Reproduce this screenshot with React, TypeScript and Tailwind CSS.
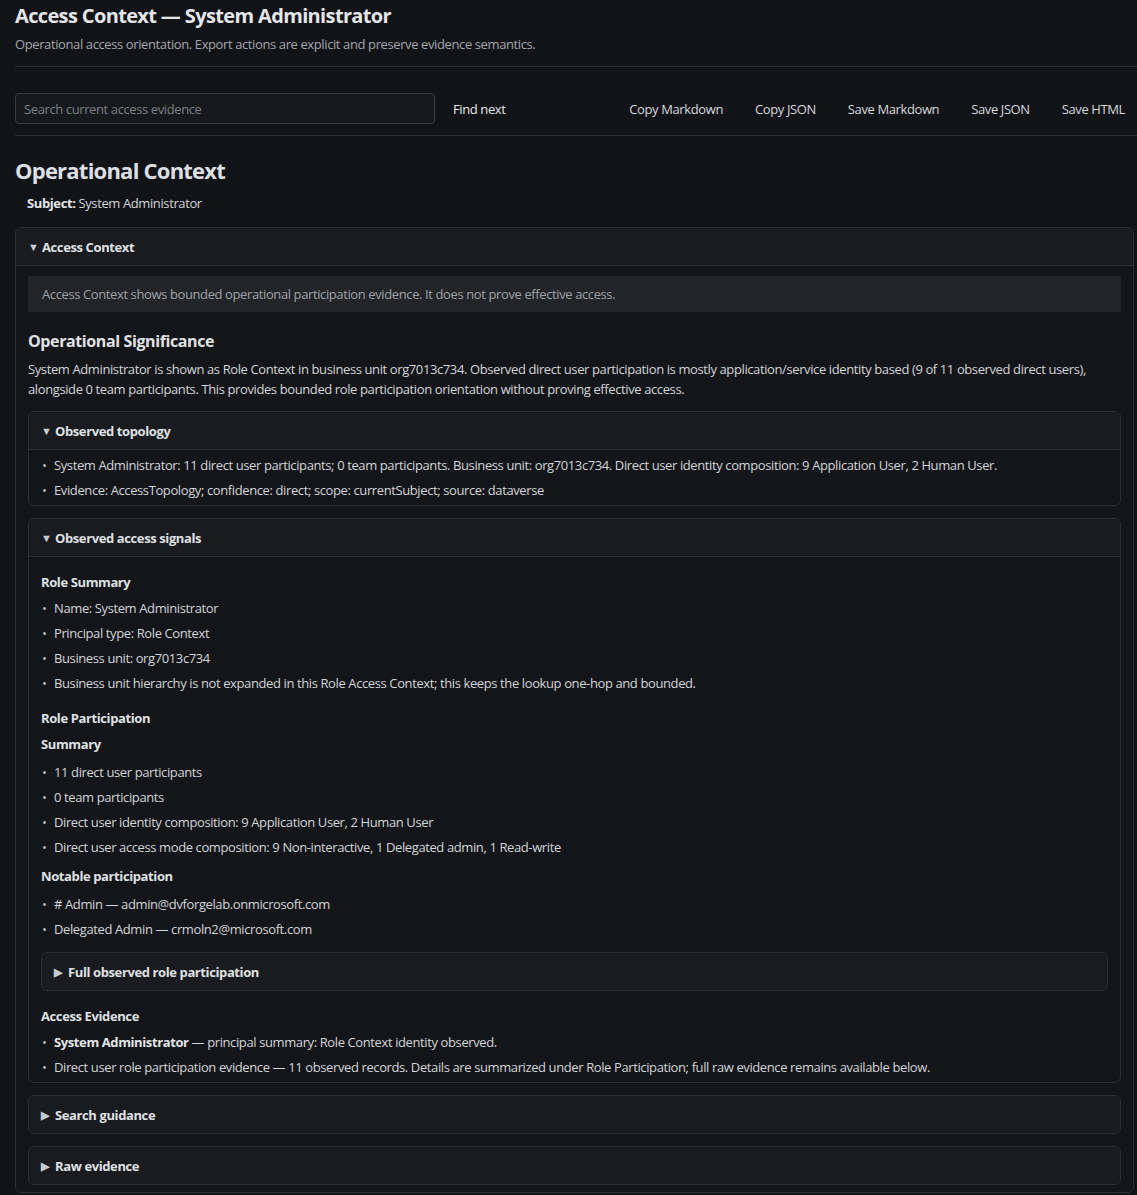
import React from 'react';

const font = { fontFamily: '"Open Sans", "Noto Sans", sans-serif' };

function Bullet({ children }: { children: React.ReactNode }) {
  return (
    <li className="flex h-5 items-center leading-5">
      <span className="w-[13px] shrink-0 pl-[1px] text-[13px] text-[#b8bcc2]">•</span>
      <span>{children}</span>
    </li>
  );
}

function Panel({
  title,
  open = false,
  className = '',
  children,
}: {
  title: string;
  open?: boolean;
  className?: string;
  children?: React.ReactNode;
}) {
  return (
    <div className={`rounded-[6px] border border-[#2c2e33] bg-[#141518] ${className}`}>
      <div
        className={`flex h-[37px] items-center gap-[4px] rounded-t-[6px] bg-[#1a1b1e] px-[12px] font-bold text-[#dfe1e4] ${
          open ? 'h-[38px] border-b border-[#2c2e33]' : 'rounded-b-[6px]'
        }`}
      >
        <span className="w-[10px] text-[11px] text-[#c8cbd0]">{open ? '▼' : '▶'}</span>
        <span>{title}</span>
      </div>
      {open && children}
    </div>
  );
}

export default function App() {
  const actions = ['Copy Markdown', 'Copy JSON', 'Save Markdown', 'Save JSON', 'Save HTML'];

  return (
    <div
      style={font}
      className="min-h-[1195px] bg-[#121316] pb-[2px] pl-[15px] text-[13px] leading-5 tracking-[-0.03em] text-[#d2d5d9]"
    >
      {/* page header */}
      <h1 className="pt-[3px] text-[20px] font-bold leading-[26px] tracking-[-0.032em] text-[#e4e6e9]">
        Access Context — System Administrator
      </h1>
      <p className="mt-[6px] leading-[18px] text-[#a3a7ad]">
        Operational access orientation. Export actions are explicit and preserve evidence semantics.
      </p>
      <div className="mt-[13px] border-t border-[#2b2d31]" />

      {/* toolbar */}
      <div className="mt-[26px] flex items-center pr-[12px]">
        <input
          type="text"
          placeholder="Search current access evidence"
          className="h-[31px] w-[420px] rounded-[4px] border border-[#3a3c41] bg-[#17181b] px-[8px] text-[13px] tracking-[-0.03em] text-[#d2d5d9] placeholder:text-[#7b8087] focus:outline-none"
        />
        <button type="button" className="ml-[18px] tracking-[-0.03em] text-[#e6e8eb]">
          Find next
        </button>
        <div className="ml-auto flex items-center gap-[32px]">
          {actions.map((a) => (
            <button key={a} type="button" className="tracking-[-0.03em] text-[#d6d9dd]">
              {a}
            </button>
          ))}
        </div>
      </div>
      <div className="mt-[11px] border-t border-[#2b2d31]" />

      {/* context */}
      <h2 className="mt-[20px] text-[22px] font-bold leading-[28px] tracking-[-0.035em] text-[#dcdfe3]">
        Operational Context
      </h2>
      <p className="mt-[10px] pl-[12px] leading-[18px]">
        <span className="font-bold text-[#e4e6e9]">Subject:</span> System Administrator
      </p>

      <Panel title="Access Context" open className="mr-[3px] mt-[15px]">
        <div className="px-[12px] pb-[7px] pt-[10px]">
          <div className="flex h-[36px] items-center bg-[#232427] px-[14px] text-[#9ea2a8]">
            Access Context shows bounded operational participation evidence. It does not prove effective access.
          </div>

          <h3 className="mt-[18px] text-[16px] font-bold leading-[22px] text-[#e0e2e5]">Operational Significance</h3>
          <p className="mt-[7px] leading-5">
            System Administrator is shown as Role Context in business unit org7013c734. Observed direct user
            participation is mostly application/service identity based (9 of 11 observed direct users), alongside 0
            team participants. This provides bounded role participation orientation without proving effective access.
          </p>

          <Panel title="Observed topology" open className="mt-[12px]">
            <ul className="flex flex-col gap-[5px] px-[12px] py-[5px]">
              <Bullet>
                System Administrator: 11 direct user participants; 0 team participants. Business unit: org7013c734.
                Direct user identity composition: 9 Application User, 2 Human User.
              </Bullet>
              <Bullet>Evidence: AccessTopology; confidence: direct; scope: currentSubject; source: dataverse</Bullet>
            </ul>
          </Panel>

          <Panel title="Observed access signals" open className="mt-[12px]">
            <div className="px-[12px] pb-[5px] pt-[15px]">
              <h4 className="font-bold text-[#dfe1e4]">Role Summary</h4>
              <ul className="mt-[6px] flex flex-col gap-[5px]">
                <Bullet>Name: System Administrator</Bullet>
                <Bullet>Principal type: Role Context</Bullet>
                <Bullet>Business unit: org7013c734</Bullet>
                <Bullet>
                  Business unit hierarchy is not expanded in this Role Access Context; this keeps the lookup one-hop and
                  bounded.
                </Bullet>
              </ul>

              <h4 className="mt-[15px] font-bold text-[#dfe1e4]">Role Participation</h4>
              <h5 className="mt-[6px] font-bold text-[#dfe1e4]">Summary</h5>
              <ul className="mt-[8px] flex flex-col gap-[5px]">
                <Bullet>11 direct user participants</Bullet>
                <Bullet>0 team participants</Bullet>
                <Bullet>Direct user identity composition: 9 Application User, 2 Human User</Bullet>
                <Bullet>Direct user access mode composition: 9 Non-interactive, 1 Delegated admin, 1 Read-write</Bullet>
              </ul>
              <h5 className="mt-[9px] font-bold text-[#dfe1e4]">Notable participation</h5>
              <ul className="mt-[8px] flex flex-col gap-[5px]">
                <Bullet># Admin — admin@dvforgelab.onmicrosoft.com</Bullet>
                <Bullet>Delegated Admin — crmoln2@microsoft.com</Bullet>
              </ul>

              <Panel title="Full observed role participation" className="mt-[13px]" />

              <h4 className="mt-[15px] font-bold text-[#dfe1e4]">Access Evidence</h4>
              <ul className="mt-[6px] flex flex-col gap-[5px]">
                <Bullet>
                  <span className="font-bold text-[#e4e6e9]">System Administrator</span> — principal summary: Role
                  Context identity observed.
                </Bullet>
                <Bullet>
                  Direct user role participation evidence — 11 observed records. Details are summarized under Role
                  Participation; full raw evidence remains available below.
                </Bullet>
              </ul>
            </div>
          </Panel>

          <Panel title="Search guidance" className="mt-[12px]" />
          <Panel title="Raw evidence" className="mt-[12px]" />
        </div>
      </Panel>
    </div>
  );
}
